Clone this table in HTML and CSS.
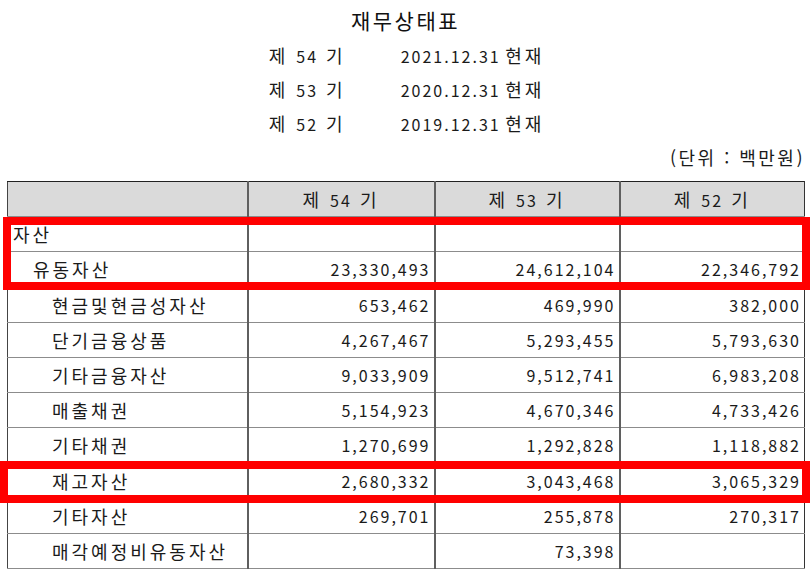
FILE: index.html
```html
<!DOCTYPE html>
<html lang="ko">
<head>
<meta charset="utf-8">
<title>재무상태표</title>
<link rel="stylesheet" href="styles.css">
</head>
<body>
<div class="page">
  <h1 class="title">재무상태표</h1>
  <div class="periods">
    <span class="ko">제 <span class="num">54</span> 기</span><span><span class="num">2021.12.31</span> <span class="ko">현재</span></span>
    <span class="ko">제 <span class="num">53</span> 기</span><span><span class="num">2020.12.31</span> <span class="ko">현재</span></span>
    <span class="ko">제 <span class="num">52</span> 기</span><span><span class="num">2019.12.31</span> <span class="ko">현재</span></span>
  </div>
  <div class="unit"><span class="ko">(단위 : 백만원)</span></div>
  <div class="table-wrap">
    <table class="fs">
      <colgroup>
        <col class="c1"><col class="c2"><col class="c3"><col class="c4">
      </colgroup>
      <thead>
        <tr>
          <th></th>
          <th><span class="ko">제 <span class="num">54</span> 기</span></th>
          <th><span class="ko">제 <span class="num">53</span> 기</span></th>
          <th><span class="ko">제 <span class="num">52</span> 기</span></th>
        </tr>
      </thead>
      <tbody>
        <tr><td class="l0">자산</td><td></td><td></td><td></td></tr>
        <tr><td class="l1">유동자산</td><td class="v">23,330,493</td><td class="v">24,612,104</td><td class="v">22,346,792</td></tr>
        <tr><td class="l2">현금및현금성자산</td><td class="v">653,462</td><td class="v">469,990</td><td class="v">382,000</td></tr>
        <tr><td class="l2">단기금융상품</td><td class="v">4,267,467</td><td class="v">5,293,455</td><td class="v">5,793,630</td></tr>
        <tr><td class="l2">기타금융자산</td><td class="v">9,033,909</td><td class="v">9,512,741</td><td class="v">6,983,208</td></tr>
        <tr><td class="l2">매출채권</td><td class="v">5,154,923</td><td class="v">4,670,346</td><td class="v">4,733,426</td></tr>
        <tr><td class="l2">기타채권</td><td class="v">1,270,699</td><td class="v">1,292,828</td><td class="v">1,118,882</td></tr>
        <tr><td class="l2">재고자산</td><td class="v">2,680,332</td><td class="v">3,043,468</td><td class="v">3,065,329</td></tr>
        <tr><td class="l2">기타자산</td><td class="v">269,701</td><td class="v">255,878</td><td class="v">270,317</td></tr>
        <tr><td class="l2">매각예정비유동자산</td><td class="v"></td><td class="v">73,398</td><td class="v"></td></tr>
      </tbody>
    </table>
    <div class="mark mark-current"></div>
    <div class="mark mark-inventory"></div>
  </div>
</div>
</body>
</html>
```

FILE: styles.css
```css
html, body {
  margin: 0;
  padding: 0;
  background: #ffffff;
}

body {
  font-family: "Noto Sans CJK KR", "Noto Sans", sans-serif;
  font-size: 16px;
  color: #1a1a1a;
}

.page {
  width: 811px;
  height: 571px;
  overflow: hidden;
  padding: 0 7px 0 7px;
  box-sizing: border-box;
}

.ko {
  font-size: 18px;
  letter-spacing: 3px;
}

.num {
  font-size: 16px;
  letter-spacing: 2px;
}

.title {
  margin: 5px 0 0 0;
  height: 30px;
  line-height: 30px;
  font-size: 21px;
  font-weight: normal;
  letter-spacing: 2.5px;
  text-align: center;
  color: #111;
}

.periods {
  margin-top: 3px;
  display: grid;
  grid-template-columns: 132px auto;
  grid-auto-rows: 34px;
  align-items: center;
  justify-content: center;
  padding-left: 2px;
}

.unit {
  height: 34px;
  line-height: 34px;
  text-align: right;
  margin-right: -1px;
}

.unit .ko {
  letter-spacing: 2.5px;
}

.table-wrap {
  position: relative;
  margin-top: 7px;
  width: 797px;
}

.fs {
  width: 797px;
  table-layout: fixed;
  border-collapse: collapse;
  border-top: 1px solid #222;
  border-left: 1px solid #444;
  border-right: 1px solid #333;
}

.c1 { width: 240px; }
.c2 { width: 187px; }
.c3 { width: 185px; }
.c4 { width: 185px; }

.fs th,
.fs td {
  height: 34.2px;
  padding: 0 5px 0 5px;
  border-bottom: 1px solid #8c8c8c;
  border-right: 2px solid #5f5f5f;
  white-space: nowrap;
  overflow: hidden;
  line-height: 20px;
}

.fs th:last-child,
.fs td:last-child {
  border-right: none;
}

.fs th {
  background: #dadada;
  font-weight: normal;
  text-align: center;
}

.fs td.v {
  text-align: right;
  letter-spacing: 2px;
  padding-right: 3px;
}

.fs td.l0,
.fs td.l1,
.fs td.l2 {
  font-size: 18px;
  letter-spacing: 3px;
}

.fs td.l0 { padding-left: 5px; }
.fs td.l1 { padding-left: 25px; }
.fs td.l2 { padding-left: 44px; }

.mark {
  position: absolute;
  border: 8px solid #ff0000;
  box-sizing: border-box;
  pointer-events: none;
}

.mark-current {
  left: -4px;
  top: 36px;
  width: 807px;
  height: 73px;
}

.mark-inventory {
  left: -7px;
  top: 280px;
  width: 810px;
  height: 42px;
}
```
